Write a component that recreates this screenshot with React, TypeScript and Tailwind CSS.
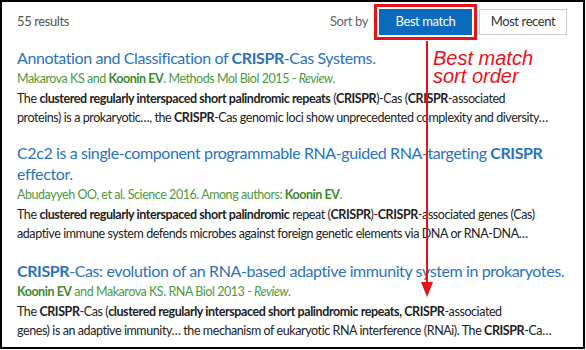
import React from 'react';

const font = { fontFamily: 'Lato, "Open Sans", sans-serif' };

function Title({ children }: { children: React.ReactNode }) {
  return (
    <div className="whitespace-nowrap text-[16px] leading-[21px] tracking-[-0.4px] text-[#2b72bd]">
      {children}
    </div>
  );
}

function Authors({ children }: { children: React.ReactNode }) {
  return (
    <div className="mt-[1px] whitespace-nowrap text-[12.5px] leading-[19px] tracking-[-0.45px] text-[#4b9a3f]">
      {children}
    </div>
  );
}

function Abstract({ lines }: { lines: React.ReactNode[] }) {
  return (
    <div className="mt-[1px] text-[12.5px] leading-[19px] tracking-[-0.42px] text-[#222]">
      {lines.map((l, i) => (
        <div key={i} className="whitespace-nowrap">
          {l}
        </div>
      ))}
    </div>
  );
}

const B = ({ children }: { children: React.ReactNode }) => <b className="font-bold">{children}</b>;
const G = ({ children }: { children: React.ReactNode }) => <b className="font-bold text-[#3d8a2e]">{children}</b>;

export default function App() {
  return (
    <div className="w-[586px] h-[350px] bg-white" style={font}>
      <div className="relative w-[585px] h-[349px] border-2 border-black overflow-hidden">
        <div className="flex items-center h-[40px] pl-[15px] pr-[16px] tracking-[-0.4px] text-[13px]">
          <span className="text-[#555]">55 results</span>
          <div className="ml-auto flex items-center">
            <span className="text-[#666] mr-[6px]">Sort by</span>
            <div className="border-[3px] border-[#e8121b] p-[2px]">
              <div className="w-[93px] h-[26px] bg-[#0a6bbd] text-white flex items-center justify-center">
                Best match
              </div>
            </div>
            <div className="ml-[2px] w-[88px] h-[26px] border border-[#ccc] text-[#333] flex items-center justify-center">
              Most recent
            </div>
          </div>
        </div>

        <div className="pl-[15px]">
          <div className="mt-[5px]">
            <Title>
              Annotation and Classification of <B>CRISPR</B>-Cas Systems.
            </Title>
            <Authors>
              Makarova KS and <G>Koonin EV</G>. Methods Mol Biol 2015 - <i>Review</i>.
            </Authors>
            <Abstract
              lines={[
                <>
                  The <B>clustered regularly interspaced short palindromic repeats</B> (<B>CRISPR</B>)-Cas (<B>CRISPR</B>-associated
                </>,
                <>
                  proteins) is a prokaryotic…, the <B>CRISPR</B>-Cas genomic loci show unprecedented complexity and diversity…
                </>,
              ]}
            />
          </div>

          <div className="mt-[15px]">
            <Title>
              C2c2 is a single-component programmable RNA-guided RNA-targeting <B>CRISPR</B>
              <br />
              effector.
            </Title>
            <Authors>
              Abudayyeh OO, et al. Science 2016. Among authors: <G>Koonin EV</G>.
            </Authors>
            <Abstract
              lines={[
                <>
                  The <B>clustered regularly interspaced short palindromic</B> repeat (<B>CRISPR</B>)-<B>CRISPR</B>-associated genes (Cas)
                </>,
                <>adaptive immune system defends microbes against foreign genetic elements via DNA or RNA-DNA…</>,
              ]}
            />
          </div>

          <div className="mt-[17px]">
            <Title>
              <B>CRISPR</B>-Cas: evolution of an RNA-based adaptive immunity system in prokaryotes.
            </Title>
            <Authors>
              <G>Koonin EV</G> and Makarova KS. RNA Biol 2013 - <i>Review</i>.
            </Authors>
            <Abstract
              lines={[
                <>
                  The <B>CRISPR</B>-Cas (<B>clustered regularly interspaced short palindromic repeats, CRISPR</B>-associated
                </>,
                <>
                  genes) is an adaptive immunity… the mechanism of eukaryotic RNA interference (RNAi). The <B>CRISPR</B>-Ca…
                </>,
              ]}
            />
          </div>
        </div>

        {/* annotation */}
        <div className="absolute left-[424px] top-[39px] w-[2px] h-[244px] bg-[#e8121b]" />
        <svg className="absolute left-[419px] top-[280px]" width="12" height="15" viewBox="0 0 12 15">
          <polygon points="0,0 12,0 6,15" fill="#e8121b" />
        </svg>
        <div
          className="absolute left-[431px] top-[47px] text-[20px] leading-[18px] italic text-[#e8121b]"
          style={{ fontFamily: '"Liberation Sans", Arial, sans-serif' }}
        >
          Best match
          <br />
          sort order
        </div>
      </div>
    </div>
  );
}
